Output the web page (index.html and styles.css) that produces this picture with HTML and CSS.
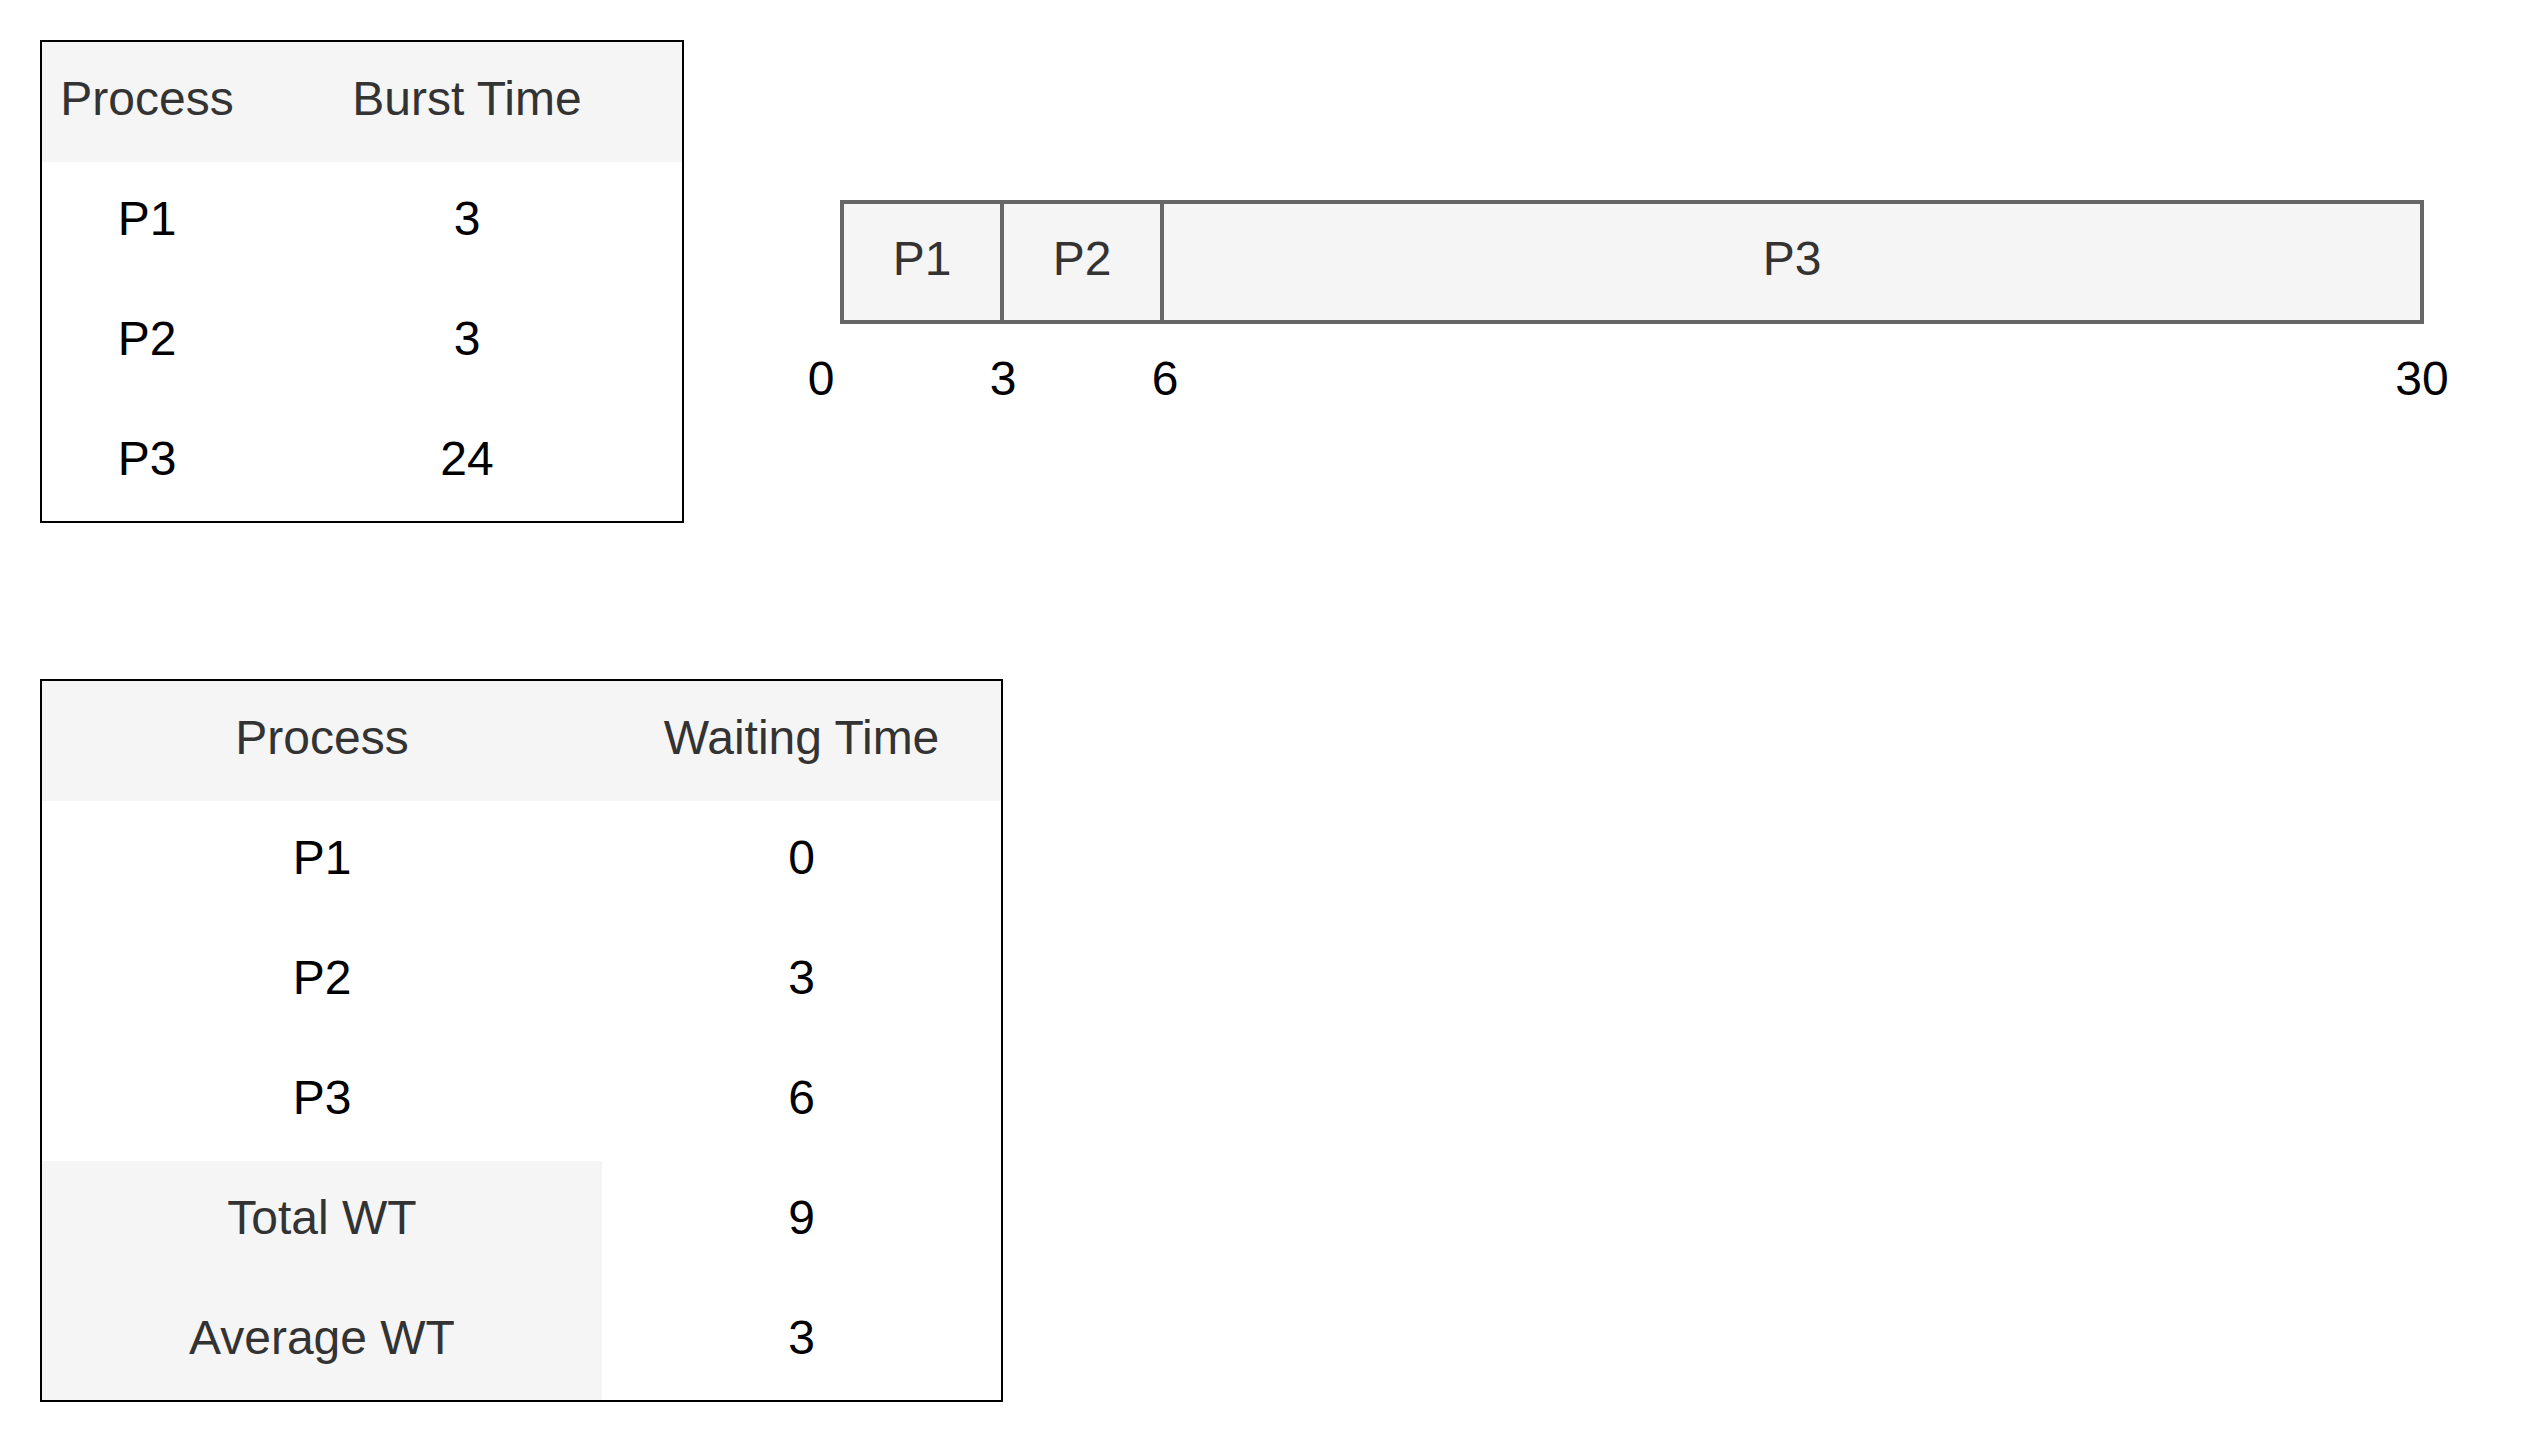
FILE: index.html
```html
<!DOCTYPE html>
<html lang="en">
<head>
<meta charset="utf-8">
<title>FCFS Scheduling</title>
<link rel="stylesheet" href="styles.css">
</head>
<body>
<div class="page">
  <div class="top">
    <div class="tbl tbl-burst">
      <div class="cell head">Process</div>
      <div class="cell head">Burst Time</div>
      <div class="cell">P1</div>
      <div class="cell">3</div>
      <div class="cell">P2</div>
      <div class="cell">3</div>
      <div class="cell">P3</div>
      <div class="cell">24</div>
    </div>
    <div class="chart">
      <div class="gantt">
        <div class="seg seg-p1">P1</div>
        <div class="seg seg-p2">P2</div>
        <div class="seg seg-p3">P3</div>
      </div>
      <div class="axis">
        <span class="tick t0">0</span>
        <span class="tick t3">3</span>
        <span class="tick t6">6</span>
        <span class="tick t30">30</span>
      </div>
    </div>
  </div>
  <div class="tbl tbl-wait">
    <div class="cell head">Process</div>
    <div class="cell head">Waiting Time</div>
    <div class="cell">P1</div>
    <div class="cell">0</div>
    <div class="cell">P2</div>
    <div class="cell">3</div>
    <div class="cell">P3</div>
    <div class="cell">6</div>
    <div class="cell head">Total WT</div>
    <div class="cell">9</div>
    <div class="cell head">Average WT</div>
    <div class="cell">3</div>
  </div>
</div>
</body>
</html>
```

FILE: styles.css
```css
* { box-sizing: border-box; }

html, body {
  margin: 0;
  padding: 0;
  background: #ffffff;
}

body {
  font-family: "Liberation Sans", Arial, Helvetica, sans-serif;
  font-size: 48px;
  color: #000000;
}

.page {
  padding: 40px 0 0 40px;
  display: flex;
  flex-direction: column;
  align-items: flex-start;
}

.top {
  display: flex;
  align-items: flex-start;
}

.tbl {
  display: grid;
  border: 2px solid #000000;
}

.tbl-burst {
  grid-template-columns: 210px 430px;
  grid-template-rows: repeat(3, 120px) 119px;
}

.tbl-wait {
  margin-top: 156px;
  grid-template-columns: 560px 399px;
  grid-template-rows: repeat(5, 120px) 119px;
}

.cell {
  display: flex;
  align-items: center;
  justify-content: center;
  padding-bottom: 6px;
  white-space: nowrap;
  line-height: 1;
}

.head {
  background: #f5f5f5;
  color: #333333;
}

.chart {
  margin-left: 156px;
  margin-top: 160px;
  display: flex;
  flex-direction: column;
}

.gantt {
  display: flex;
  width: 1584px;
  height: 124px;
  border: 4px solid #666666;
  background: #f5f5f5;
  color: #333333;
}

.seg {
  display: flex;
  align-items: center;
  justify-content: center;
  padding-bottom: 6px;
  line-height: 1;
}

.seg-p1 {
  width: 160px;
  border-right: 4px solid #666666;
}

.seg-p2 {
  width: 160px;
  border-right: 4px solid #666666;
}

.seg-p3 {
  flex: 1;
}

.axis {
  display: flex;
  margin-top: 31px;
  line-height: 1;
}

.tick {
  width: 80px;
  text-align: center;
  flex: none;
}

.t0 { margin-left: -59px; }
.t3 { margin-left: 102px; }
.t6 { margin-left: 82px; }
.t30 { margin-left: 1177px; }
```
